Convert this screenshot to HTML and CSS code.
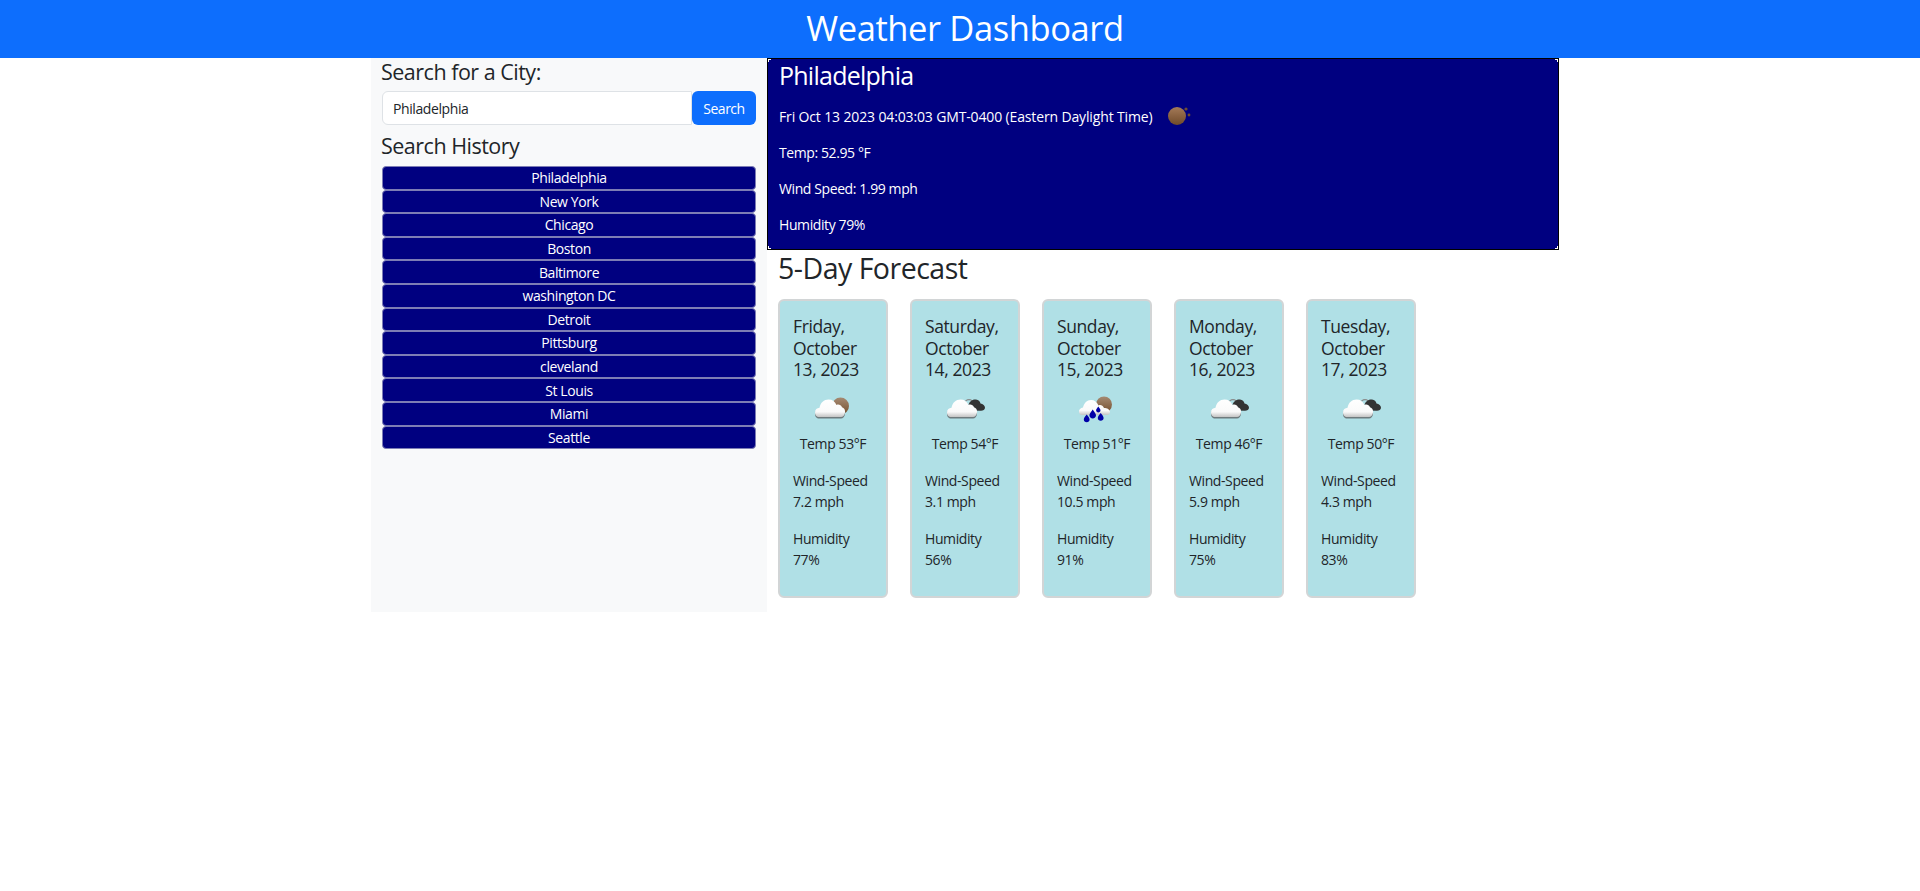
FILE: index.html
```html
<!DOCTYPE html>
<html lang="en">
<head>
  <meta charset="UTF-8">
  <title>Weather Dashboard</title>
  <link rel="stylesheet" href="styles.css">
</head>
<body>

  <svg class="sprites" width="0" height="0">
    <defs>
      <linearGradient id="cloudFill" x1="0" y1="0" x2="0" y2="1">
        <stop offset="0" stop-color="#ffffff"/>
        <stop offset="0.7" stop-color="#fafafa"/>
        <stop offset="1" stop-color="#c4c4c4"/>
      </linearGradient>
      <linearGradient id="sunFill" x1="0" y1="0" x2="0" y2="1">
        <stop offset="0" stop-color="#a58a72"/>
        <stop offset="1" stop-color="#75502f"/>
      </linearGradient>
      <linearGradient id="moonFill" x1="0" y1="0" x2="0" y2="1">
        <stop offset="0" stop-color="#a47a58"/>
        <stop offset="1" stop-color="#6f4a2a"/>
      </linearGradient>
      <symbol id="cloud" viewBox="0 0 50 50">
        <path fill="#6f7b7e" d="M11 32.5C8 32.5 7 30 7 28C7 25 9 23.5 11.5 23.3L33 23C36 23.5 37.5 25.5 37 28C36.8 30.5 35 32.5 33 32.5Z"/>
        <path fill="url(#cloudFill)" d="M11 31C8 31 7 28.5 7 26.5C7 23.5 9 22 11.5 21.8C12.5 16.5 16 13.5 20.5 13.5C24.5 13.5 27 15.5 28.5 19C30.5 18 33 18.8 34 21.3C36 21.8 37.5 24 37 26.5C36.8 29 35 31 33 31Z"/>
      </symbol>
      <symbol id="darkCloud" viewBox="0 0 50 50">
        <circle cx="29" cy="18" r="5" fill="#8a8a8a"/>
        <circle cx="29" cy="18" r="3.8" fill="#b0e0e6"/>
        <path fill="#333" d="M28 24.5C25.5 24 25.5 20 28.5 19.5C29 15.5 32.5 13 36 13.5C38.5 13.8 40 15.5 40.5 17.5C43 17.8 45 19.5 45 21.8C45 23.5 43 24.8 41 24.8Z"/>
      </symbol>
    </defs>
  </svg>

  <header class="top-bar">
    <h1>Weather Dashboard</h1>
  </header>

  <div class="wrap">
    <aside class="sidebar">
      <h4>Search for a City:</h4>
      <div class="search-row">
        <input class="city-input" type="text" value="Philadelphia">
        <button class="search-btn">Search</button>
      </div>
      <h4>Search History</h4>
      <div class="history">
        <button>Philadelphia</button>
        <button>New York</button>
        <button>Chicago</button>
        <button>Boston</button>
        <button>Baltimore</button>
        <button>washington DC</button>
        <button>Detroit</button>
        <button>Pittsburg</button>
        <button>cleveland</button>
        <button>St Louis</button>
        <button>Miami</button>
        <button>Seattle</button>
      </div>
    </aside>

    <main class="content">
      <section class="today">
        <h3>Philadelphia</h3>
        <div class="today-date">
          <p>Fri Oct 13 2023 04:03:03 GMT-0400 (Eastern Daylight Time)</p>
          <svg class="moon" width="28" height="28" viewBox="0 0 28 28">
            <circle cx="11" cy="13" r="9" fill="url(#moonFill)"/>
            <circle cx="20" cy="6" r="1.6" fill="#6d4c33"/>
            <circle cx="23" cy="12" r="1.4" fill="#6d4c33"/>
          </svg>
        </div>
        <p>Temp: 52.95 °F</p>
        <p>Wind Speed: 1.99 mph</p>
        <p>Humidity 79%</p>
      </section>

      <h2>5-Day Forecast</h2>
      <div class="cards">
        <div class="card">
          <h5>Friday, October 13, 2023</h5>
          <svg class="icon" width="50" height="50" viewBox="0 0 50 50">
            <circle cx="32.5" cy="20" r="8.5" fill="url(#sunFill)"/>
            <use href="#cloud" width="50" height="50"/>
          </svg>
          <p class="temp">Temp 53°F</p>
          <p>Wind-Speed<br>7.2 mph</p>
          <p>Humidity<br>77%</p>
        </div>
        <div class="card">
          <h5>Saturday, October 14, 2023</h5>
          <svg class="icon" width="50" height="50" viewBox="0 0 50 50">
            <use href="#darkCloud" width="50" height="50"/>
            <use href="#cloud" width="50" height="50"/>
          </svg>
          <p class="temp">Temp 54°F</p>
          <p>Wind-Speed<br>3.1 mph</p>
          <p>Humidity<br>56%</p>
        </div>
        <div class="card">
          <h5>Sunday, October 15, 2023</h5>
          <svg class="icon" width="50" height="50" viewBox="0 0 50 50">
            <circle cx="32" cy="18.5" r="8" fill="url(#sunFill)"/>
            <path fill="url(#cloudFill)" d="M10 29C8 29 7 27.5 7 25.5C7 23.5 8.5 22 11 21.5C12 17 15 14 19 14C22.5 14 25 16 26.5 19.5C28.5 18.5 31 19.5 32 22C35 22 38 23.5 38 26C38 28 36.5 29 35 29Z"/>
            <g fill="#0000a8">
              <path d="M14.7 28.5C16.5 31 17.6 32 17.6 33.4C17.6 35.1 16.3 36.2 14.7 36.2C13.1 36.2 11.8 35.1 11.8 33.4C11.8 32 12.9 31 14.7 28.5Z"/>
              <path d="M20.7 23.5C22.7 26.5 24 27.7 24 29.3C24 31.2 22.5 32.6 20.7 32.6C18.9 32.6 17.4 31.2 17.4 29.3C17.4 27.7 18.7 26.5 20.7 23.5Z"/>
              <path d="M26.3 20.5C27.6 22.3 28.5 23.2 28.5 24.3C28.5 25.6 27.5 26.5 26.3 26.5C25.1 26.5 24.1 25.6 24.1 24.3C24.1 23.2 25 22.3 26.3 20.5Z"/>
              <path d="M28.7 27C30.5 29.5 31.6 30.5 31.6 31.9C31.6 33.6 30.3 34.7 28.7 34.7C27.1 34.7 25.8 33.6 25.8 31.9C25.8 30.5 26.9 29.5 28.7 27Z"/>
            </g>
          </svg>
          <p class="temp">Temp 51°F</p>
          <p>Wind-Speed<br>10.5 mph</p>
          <p>Humidity<br>91%</p>
        </div>
        <div class="card">
          <h5>Monday, October 16, 2023</h5>
          <svg class="icon" width="50" height="50" viewBox="0 0 50 50">
            <use href="#darkCloud" width="50" height="50"/>
            <use href="#cloud" width="50" height="50"/>
          </svg>
          <p class="temp">Temp 46°F</p>
          <p>Wind-Speed<br>5.9 mph</p>
          <p>Humidity<br>75%</p>
        </div>
        <div class="card">
          <h5>Tuesday, October 17, 2023</h5>
          <svg class="icon" width="50" height="50" viewBox="0 0 50 50">
            <use href="#darkCloud" width="50" height="50"/>
            <use href="#cloud" width="50" height="50"/>
          </svg>
          <p class="temp">Temp 50°F</p>
          <p>Wind-Speed<br>4.3 mph</p>
          <p>Humidity<br>83%</p>
        </div>
      </div>
    </main>
  </div>

</body>
</html>
```

FILE: styles.css
```css
body {
  margin: 0;
  background-color: #fff;
  color: #212529;
  font-family: "Open Sans", "Noto Sans", sans-serif;
  font-size: 14px;
  line-height: 21px;
  letter-spacing: -0.4px;
}
.sprites {
  display: block;
  height: 0;
}
h1, h2, h3, h4, h5, p {
  margin: 0;
  font-weight: 400;
}
.top-bar {
  height: 58px;
  padding-left: 10px;
  background-color: #0d6efd;
  color: #fff;
  text-align: center;
}
.top-bar h1 {
  font-size: 34.5px;
  line-height: 55px;
  letter-spacing: -0.4px;
}
.wrap {
  display: flex;
  align-items: flex-start;
  width: 1188px;
  margin-left: 371px;
}
.sidebar {
  width: 396px;
  height: 554px;
  padding: 0 11px;
  box-sizing: border-box;
  background-color: #f8f9fa;
}
.sidebar h4 {
  margin-left: -1px;
  font-size: 21.5px;
  line-height: 27px;
  letter-spacing: -0.5px;
}
.search-row {
  display: flex;
  margin: 6px 0 7px;
  height: 34px;
}
.city-input {
  flex: 1;
  min-width: 0;
  padding: 0 10px;
  border: 1px solid #dee2e6;
  border-radius: 6px 0 0 6px;
  color: #212529;
  font: inherit;
  letter-spacing: inherit;
}
.search-btn {
  width: 64px;
  border: none;
  border-radius: 6px;
  background-color: #0d6efd;
  color: #fff;
  font: inherit;
  letter-spacing: -0.5px;
}
.history {
  display: flex;
  flex-direction: column;
  margin-top: 7px;
}
.history button {
  height: 23.6px;
  padding: 0;
  border: 1px solid #7d7db5;
  border-radius: 4px;
  background-color: #000080;
  color: #fff;
  font: inherit;
  letter-spacing: inherit;
}
.content {
  flex: 1;
}
/* the little white ticks in the corners of the panel */
.today {
  height: 192px;
  padding: 0 11px;
  box-sizing: border-box;
  border: 1px solid #000;
  background-color: #000080;
  background-image:
    linear-gradient(#fff, #fff), linear-gradient(#fff, #fff),
    linear-gradient(#fff, #fff), linear-gradient(#fff, #fff),
    linear-gradient(#fff, #fff), linear-gradient(#fff, #fff),
    linear-gradient(#fff, #fff), linear-gradient(#fff, #fff);
  background-size: 3px 1px, 1px 3px, 3px 1px, 1px 3px, 3px 1px, 1px 3px, 3px 1px, 1px 3px;
  background-position: left top, left top, right top, right top, left bottom, left bottom, right bottom, right bottom;
  background-repeat: no-repeat;
  color: #fff;
}
.today h3 {
  font-size: 25px;
  line-height: 32px;
  letter-spacing: -0.75px;
  margin-bottom: 15px;
}
.today p {
  margin-bottom: 15px;
}
.today-date {
  display: flex;
  align-items: flex-start;
  letter-spacing: -0.14px;
}
.moon {
  margin: -3px 0 0 13px;
}
.content h2 {
  margin: -1px 0 12px 11px;
  font-size: 28.5px;
  line-height: 38px;
  letter-spacing: -0.5px;
}
.cards {
  display: flex;
  gap: 22px;
  margin-left: 11px;
}
.card {
  width: 110px;
  height: 299px;
  padding: 15px 13px 0;
  box-sizing: border-box;
  border: 2px solid #d2d5d6;
  border-radius: 6px;
  background-color: #b0e0e6;
}
.card h5 {
  font-size: 17.5px;
  line-height: 21.5px;
  letter-spacing: -0.4px;
}
.card p {
  margin-bottom: 15px;
  line-height: 21.5px;
}
.icon {
  display: block;
  margin: 5.5px auto -3px;
}
.card .temp {
  text-align: center;
}
```
